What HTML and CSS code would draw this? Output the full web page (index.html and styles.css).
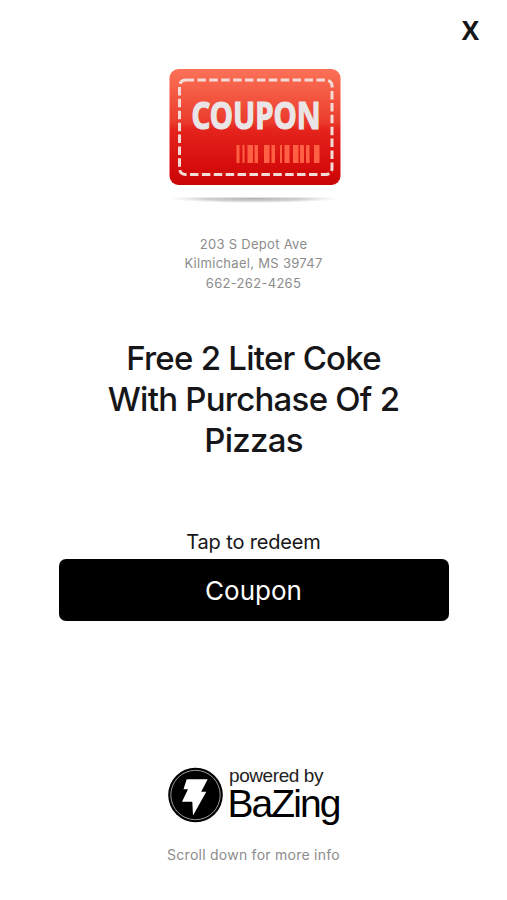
FILE: index.html
```html
<!DOCTYPE html>
<html lang="en">
<head>
    <meta charset="UTF-8">
    <meta name="viewport" content="width=device-width, initial-scale=1.0">
    <title>Coupon</title>
    <link rel="stylesheet" href="styles.css">
</head>
<body>
<div class="page">
    <header class="top-bar">
        <button class="close" aria-label="Close">X</button>
    </header>
    <svg class="ticket" width="180" height="140" viewBox="165 65 180 140">
        <defs>
            <linearGradient id="red" x1="0" y1="0" x2="0" y2="1">
                <stop offset="0" stop-color="#fb7158"/>
                <stop offset="0.25" stop-color="#f3553f"/>
                <stop offset="0.46" stop-color="#ea3b2d"/>
                <stop offset="0.52" stop-color="#e5241d"/>
                <stop offset="0.85" stop-color="#d50c0c"/>
                <stop offset="1" stop-color="#c90505"/>
            </linearGradient>
            <radialGradient id="shade">
                <stop offset="0" stop-color="#aaa" stop-opacity="0.9"/>
                <stop offset="0.6" stop-color="#b5b5b5" stop-opacity="0.6"/>
                <stop offset="1" stop-color="#ccc" stop-opacity="0"/>
            </radialGradient>
            <clipPath id="below"><rect x="165" y="197.500" width="180" height="8"/></clipPath>
        </defs>
        <ellipse cx="254" cy="198.500" rx="85" ry="4.500" fill="url(#shade)" clip-path="url(#below)"/>
        <rect x="169.500" y="69" width="171" height="116" rx="9" fill="url(#red)"/>
        <rect x="179.500" y="80" width="152.500" height="94.500" rx="6" fill="none" stroke="#f3dcd8" stroke-width="3" stroke-dasharray="8.500 3.400"/>
        <text class="ticket-text" x="191.500" y="128.500" textLength="129" lengthAdjust="spacingAndGlyphs">COUPON</text>
        <g fill="#ff6044">
            <rect x="236.500" y="145" width="3" height="18"/>
            <rect x="242.500" y="145" width="2" height="18"/>
            <rect x="247.500" y="145" width="5.500" height="18"/>
            <rect x="254.500" y="145" width="3.500" height="18"/>
            <rect x="264" y="145" width="5.500" height="18"/>
            <rect x="271.500" y="145" width="3.500" height="18"/>
            <rect x="280" y="145" width="2" height="18"/>
            <rect x="284.500" y="145" width="5" height="18"/>
            <rect x="293" y="145" width="5.500" height="18"/>
            <rect x="300" y="145" width="4" height="18"/>
            <rect x="306" y="145" width="3.500" height="18"/>
            <rect x="314" y="145" width="5.500" height="18"/>
        </g>
    </svg>
    <address class="address">
        <div>203 S Depot Ave</div>
        <div>Kilmichael, MS 39747</div>
        <div>662-262-4265</div>
    </address>
    <h1 class="offer">Free 2 Liter Coke<br>With Purchase Of 2<br>Pizzas</h1>
    <p class="hint">Tap to redeem</p>
    <button class="redeem">Coupon</button>
    <svg class="brand" width="180" height="65" viewBox="165 762 180 65">
        <circle cx="195.500" cy="795" r="27.300" fill="#000"/>
        <circle cx="195.500" cy="795" r="24.700" fill="none" stroke="#aaa" stroke-width="0.900"/>
        <path d="M186.700 779.300H207.700L201.200 791.800H206.300L193 815.500L192.300 801.700H182L188 789.300H183.500Z" fill="#fff"/>
        <text class="brand-small" x="229" y="781.500" textLength="94.500">powered by</text>
        <text class="brand-name" x="227.500" y="816.500" textLength="114">BaZing</text>
    </svg>
    <p class="more">Scroll down for more info</p>
</div>
</body>
</html>
```

FILE: styles.css
```css
body {
    margin: 0;
    background: #fff;
    color: #161618;
    font-family: Inter, "Liberation Sans", sans-serif;
}
.page {
    height: 900px;
    display: flex;
    flex-direction: column;
    align-items: center;
    overflow: hidden;
}
button {
    border: none;
    padding: 0;
    font-family: inherit;
    cursor: pointer;
}
.top-bar {
    width: 100%;
    height: 65px;
    display: flex;
    justify-content: flex-end;
    align-items: flex-start;
}
.close {
    margin: 15px 28px 0 0;
    background: none;
    color: #161618;
    font-family: "Open Sans", sans-serif;
    font-size: 26px;
    font-weight: 700;
    line-height: 30px;
}
.ticket {
    margin-left: 3px;
}
.ticket-text {
    font-family: "Noto Sans", sans-serif;
    font-size: 37px;
    font-weight: 700;
    fill: #eae6e8;
    stroke: #eae6e8;
    stroke-width: 1.2px;
}
.address {
    margin-top: 29.5px;
    color: #8c8c8c;
    font-size: 13px;
    font-style: normal;
    letter-spacing: 0.3px;
    line-height: 19.5px;
    text-align: center;
}
.offer {
    margin: 45px 0 0;
    font-size: 33px;
    font-weight: 500;
    letter-spacing: -0.75px;
    line-height: 41px;
    text-align: center;
}
.hint {
    margin: 68px 0 0;
    font-size: 20px;
    letter-spacing: -0.15px;
    line-height: 26px;
}
.redeem {
    width: 390px;
    height: 62px;
    margin-top: 4px;
    border-radius: 7px;
    background: #000;
    color: #fff;
    font-size: 26px;
    line-height: 64px;
}
.brand {
    margin: 141px 0 0 3px;
}
.brand-small {
    font-family: "Liberation Sans", sans-serif;
    font-size: 19px;
    fill: #222;
}
.brand-name {
    font-family: "Liberation Sans", sans-serif;
    font-size: 39px;
    fill: #000;
}
.more {
    margin: 18px 0 0;
    color: #8c8c8c;
    font-size: 14px;
    letter-spacing: 0.25px;
    line-height: 20px;
}
```
